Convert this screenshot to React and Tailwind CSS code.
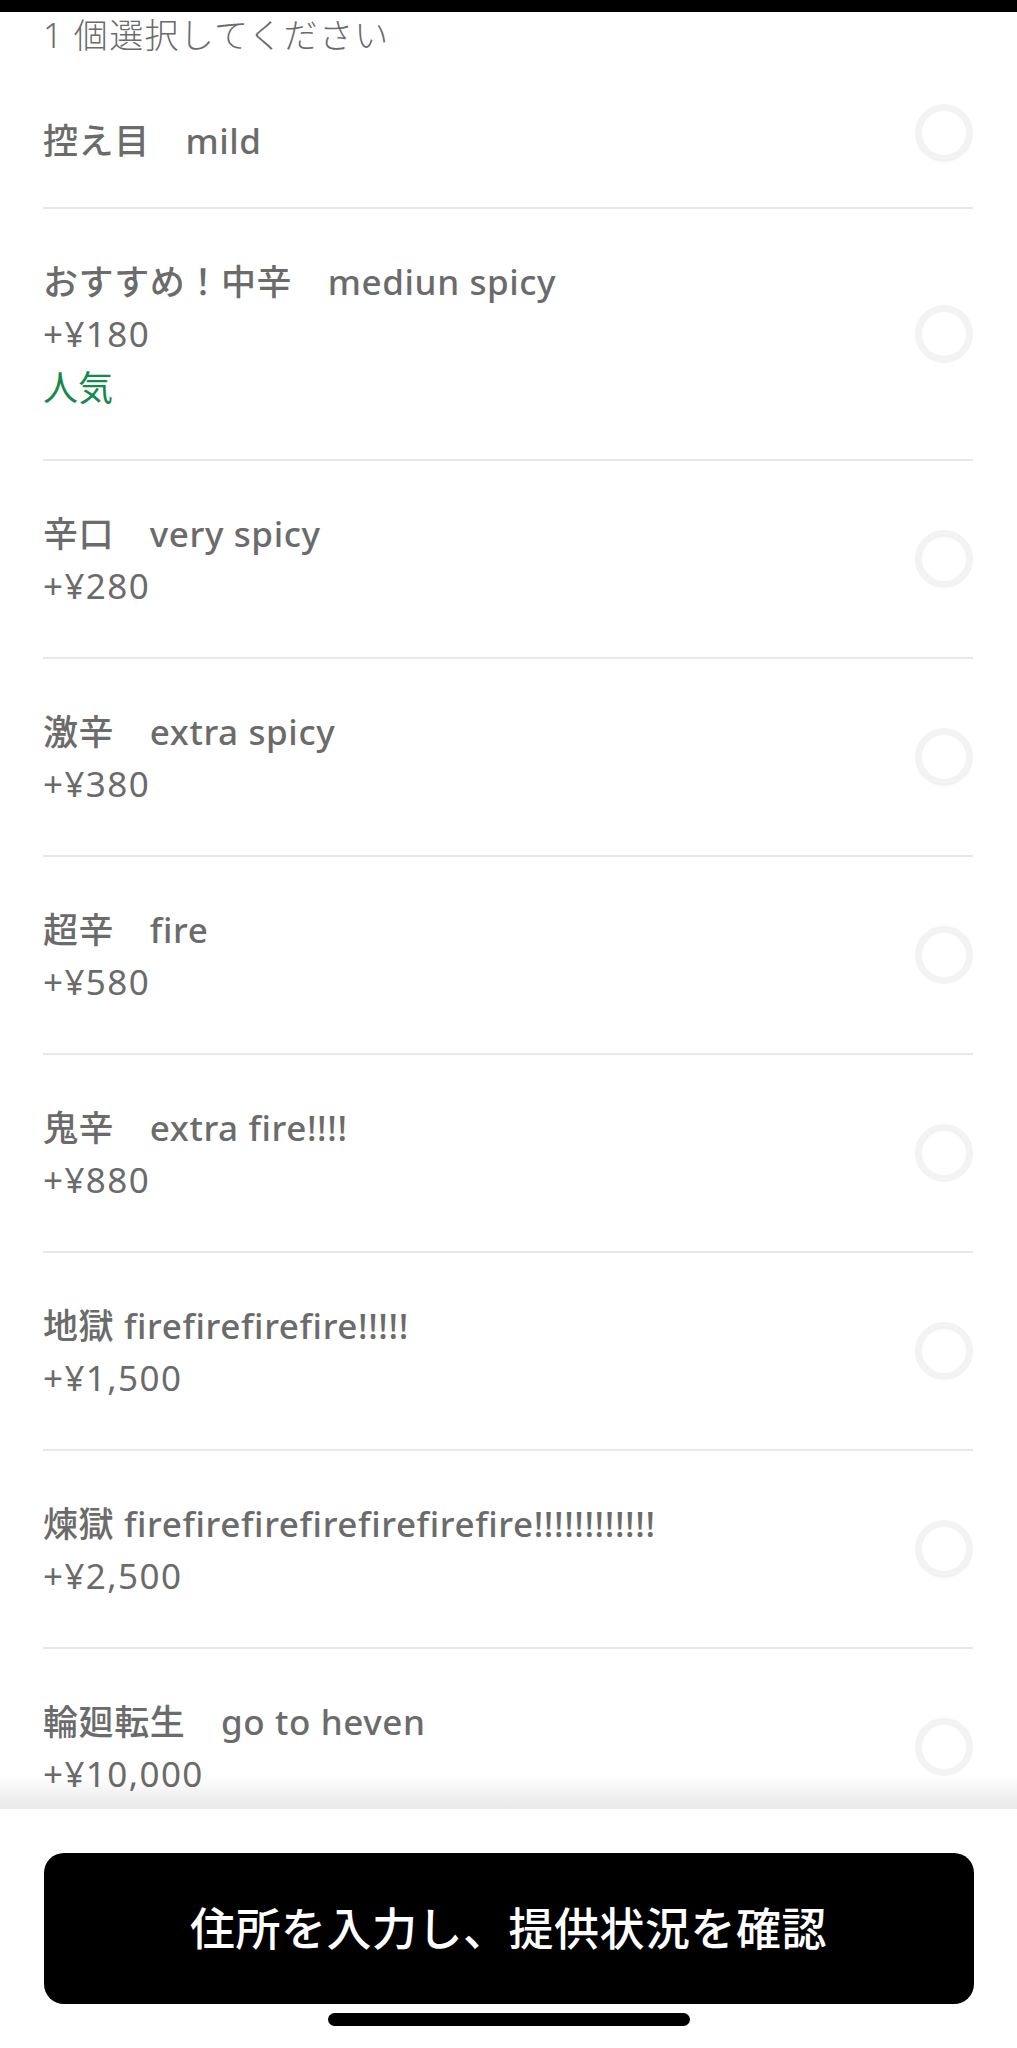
const options = [
  { name: '控え目　mild', price: null },
  { name: 'おすすめ！中辛　mediun spicy', price: '+¥180', tag: '人気' },
  { name: '辛口　very spicy', price: '+¥280' },
  { name: '激辛　extra spicy', price: '+¥380' },
  { name: '超辛　fire', price: '+¥580' },
  { name: '鬼辛　extra fire!!!!', price: '+¥880' },
  { name: '地獄 firefirefirefire!!!!!', price: '+¥1,500' },
  { name: '煉獄 firefirefirefirefirefirefire!!!!!!!!!!!!', price: '+¥2,500' },
  { name: '輪廻転生　go to heven', price: '+¥10,000' },
];

function Radio() {
  return <div className="w-[58px] h-[58px] shrink-0 rounded-full border-[7px] border-[#f3f3f3]" />;
}

function OptionRow({ option, first, last }) {
  if (first) {
    return (
      <div className="flex items-center justify-between border-b-2 border-[#e8e8e8]">
        <div className="pt-[57px] pb-[40px]">
          <p className="text-[35px] leading-[52px] font-medium tracking-[0.6px] text-[#6b6b6b]">{option.name}</p>
        </div>
        <Radio />
      </div>
    );
  }

  return (
    <div className={`flex items-center justify-between ${last ? '' : 'border-b-2 border-[#e8e8e8]'}`}>
      <div className="pt-[47px] pb-[45px]">
        <p className="text-[35px] leading-[52px] font-medium tracking-[0.6px] text-[#6b6b6b] whitespace-nowrap">{option.name}</p>
        <p className="text-[35px] leading-[52px] tracking-[1.4px] text-[#6b6b6b]">{option.price}</p>
        {option.tag && (
          <p className="mt-[2px] text-[35px] leading-[52px] text-[#138a4b]">{option.tag}</p>
        )}
      </div>
      <Radio />
    </div>
  );
}

export default function App() {
  return (
    <div className="w-[1017px] h-[2048px] flex flex-col overflow-hidden bg-white font-['Noto_Sans','Noto_Sans_CJK_JP',sans-serif]">
      <div className="h-[12px] shrink-0 bg-black" />

      {/* Option list */}
      <div className="flex-1 overflow-hidden pl-[43px] pr-[44px]">
        <p className="text-[34px] leading-[46px] font-light tracking-[1.3px] text-[#6b6b6b]">1 個選択してください</p>
        {options.map((option, i) => (
          <OptionRow key={i} option={option} first={i === 0} last={i === options.length - 1} />
        ))}
      </div>

      {/* Bottom action panel */}
      <div className="relative z-10 h-[239px] shrink-0 bg-white flex flex-col items-center">
        <div className="absolute -top-[34px] left-0 right-0 h-[34px] bg-gradient-to-b from-transparent to-black/[0.09]" />
        <button className="mt-[44px] w-[930px] h-[151px] rounded-[20px] bg-black text-white text-[45px] font-medium tracking-[0.5px]">
          住所を入力し、提供状況を確認
        </button>
        <div className="mt-[9px] w-[362px] h-[13px] rounded-full bg-black" />
      </div>
    </div>
  );
}
